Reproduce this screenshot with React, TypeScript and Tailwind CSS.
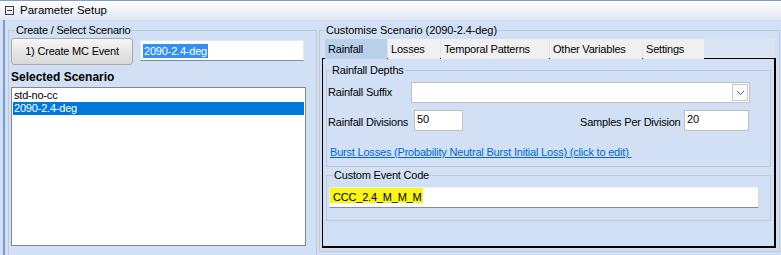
import React from 'react';

const tabs = [
  { label: 'Rainfall', w: 'w-[62px]', active: true },
  { label: 'Losses', w: 'w-[52px]' },
  { label: 'Temporal Patterns', w: 'w-[108px]' },
  { label: 'Other Variables', w: 'w-[92px]' },
  { label: 'Settings', w: 'w-[61px]' },
];

const App: React.FC = () => {
  return (
    <div className="w-[781px] h-[255px] overflow-hidden bg-[#d1e0f5] font-['Liberation_Sans',Arial,sans-serif] text-[11px] leading-[13px] tracking-[-0.2px] text-black whitespace-nowrap">
      {/* header */}
      <div className="h-[20px] border-t border-[#7d9dd0] bg-gradient-to-b from-white via-[#eef2f9] to-[#dde6f3] flex items-center pl-[5px] gap-[6px]">
        <span className="w-[9px] h-[9px] border border-[#3c3c3c] flex items-center justify-center">
          <span className="w-[5px] h-px bg-[#3c3c3c]" />
        </span>
        <span className="text-[11.5px] tracking-normal">Parameter Setup</span>
      </div>

      <div className="flex ml-[3px] pl-[3px] border-l-2 border-[#7b9ad0] h-[235px] pt-[4px]">
        {/* left group */}
        <fieldset className="w-[309px] h-[240px] border border-[#c2c8d2]">
          <legend className="ml-[6px] px-px">Create / Select Scenario</legend>
          <div className="flex items-start mt-px pl-[2px]">
            <button className="w-[122px] h-[27px] rounded-[3px] border border-[#a9a9a9] bg-gradient-to-b from-[#f6f6f6] to-[#d8d8d8]">
              1) Create MC Event
            </button>
            <div className="ml-[7px] mt-[2px] w-[164px] h-[21px] bg-white border border-[#e4e9ef] border-b-[#7c8fa6] flex items-center pl-[2px]">
              <span className="bg-[#3390f0] text-white leading-[14px] px-px">2090-2.4-deg</span>
            </div>
          </div>
          <div className="pl-[2px] mt-[5px] font-bold text-[12px] leading-[14px] tracking-normal">Selected Scenario</div>
          <div className="ml-[2px] mt-[3px] w-[295px] h-[159px] bg-white border border-[#828790] p-px">
            <div className="h-[13px] leading-[13px] pl-px">std-no-cc</div>
            <div className="h-[13px] leading-[13px] pl-px bg-[#0078d7] text-white">2090-2.4-deg</div>
          </div>
        </fieldset>

        {/* right group */}
        <fieldset className="ml-[2px] w-[461px] h-[228px] border border-[#c2c8d2]">
          <legend className="ml-[5px] px-px tracking-[-0.1px]">Customise Scenario (2090-2.4-deg)</legend>
          <div className="ml-[4px] mt-[2px] w-[451px] h-[19px] bg-[#dae5f4] flex gap-px pl-px relative z-10">
            {tabs.map((t) => (
              <div
                key={t.label}
                className={`${t.w} h-[20px] pl-[3px] pt-[4px] ${t.active ? 'bg-[#b9d0ea]' : 'bg-[#f0f0f0]'}`}
              >
                {t.label}
              </div>
            ))}
          </div>
          <div className="ml-[2px] w-[454px] h-[190px] border-l border-t border-r-2 border-b-2 border-black pl-[3px] pt-[5px]">
            <fieldset className="w-[445px] h-[103px] border border-[#c2c8d2]">
              <legend className="ml-[4px] px-px">Rainfall Depths</legend>
              <div className="flex items-center mt-[5px] pl-px">
                <span className="w-[83px]">Rainfall Suffix</span>
                <div className="w-[339px] h-[21px] bg-white border border-[#c0c0c0] flex items-center justify-end pr-[1px]">
                  <div className="w-[16px] h-[17px] border border-[#c8c8c8] bg-[#fafafa] flex items-center justify-center">
                    <svg width="9" height="6" viewBox="0 0 9 6">
                      <path d="M1 1 L4.5 4.5 L8 1" fill="none" stroke="#606060" strokeWidth="1" />
                    </svg>
                  </div>
                </div>
              </div>
              <div className="flex items-center mt-[7px] pl-px">
                <span className="w-[86px] pt-[3px]">Rainfall Divisions</span>
                <div className="w-[49px] h-[21px] bg-white border border-[#c0c0c0] pl-[2px] pt-[2px]">50</div>
                <span className="ml-[117px] w-[104px] pt-[3px]">Samples Per Division</span>
                <div className="w-[65px] h-[21px] bg-white border border-[#c0c0c0] pl-[2px] pt-[2px]">20</div>
              </div>
              <div className="mt-[14px] pl-[3px] leading-[14px]">
                <span className="text-[#0066cc] underline whitespace-pre">Burst Losses (Probability Neutral Burst Initial Loss) (click to edit) </span>
              </div>
            </fieldset>

            <fieldset className="mt-[2px] w-[445px] h-[52px] border border-[#c2c8d2]">
              <legend className="ml-[6px] px-px">Custom Event Code</legend>
              <div className="ml-[2px] mt-[5px] w-[430px] h-[21px] bg-white border border-[#ececec] border-b-[#8c8c8c] border-r-[#d8d8d8]">
                <span className="inline-block w-[93px] h-[15px] bg-[#f7f51a] pl-[3px] pt-[2px] leading-[14px]">CCC_2.4_M_M_M</span>
              </div>
            </fieldset>
          </div>
        </fieldset>
      </div>
    </div>
  );
};

export default App;
